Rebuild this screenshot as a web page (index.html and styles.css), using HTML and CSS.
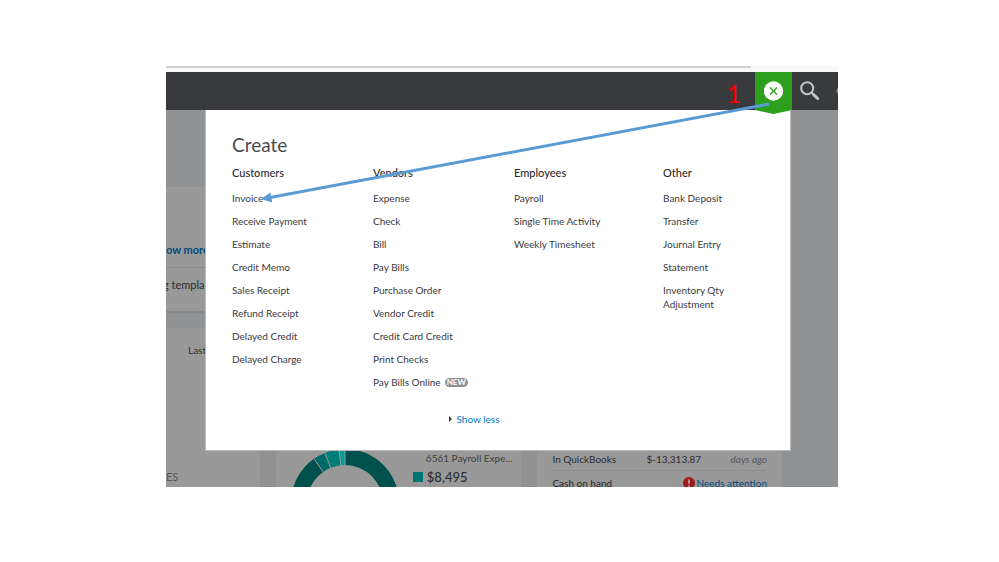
FILE: index.html
```html
<!DOCTYPE html>
<html lang="en">
<head>
    <meta charset="UTF-8">
    <meta name="viewport" content="width=device-width, initial-scale=1.0">
    <title>Create</title>
    <link rel="stylesheet" href="styles.css">
</head>
<body>

    <div class="frame">
        <div class="strip"></div>

        <header class="topbar">
            <span class="step">1</span>
            <button class="create-btn" aria-label="Close create menu">
                <svg width="20" height="20" viewBox="0 0 20 20">
                    <circle cx="9.5" cy="10" r="9.7" fill="#fff"/>
                    <path d="M6 6.500l7 7M13 6.500l-7 7" stroke="#2ca01c" stroke-width="1.4"/>
                </svg>
            </button>
            <button class="search-btn" aria-label="Search">
                <svg width="20" height="20" viewBox="0 0 20 20">
                    <circle cx="7.2" cy="7.2" r="6" fill="none" stroke="#c3c6cb" stroke-width="2"/>
                    <path d="M11.5 11.500l2.500 2.500" stroke="#c3c6cb" stroke-width="2"/>
                    <path d="M13.8 13.800l3.900 3.700" stroke="#c3c6cb" stroke-width="3" stroke-linecap="round"/>
                </svg>
            </button>
            <span class="more-dot"></span>
        </header>

        <main class="dashboard">
            <section class="card setup">
                <div class="setup-top"><a href="#">ow more</a></div>
                <div class="setup-bottom">g templa</div>
            </section>

            <div class="cards">
                <section class="card income">
                    <span class="period">Last</span>
                    <span class="label">ES</span>
                </section>

                <section class="card expenses">
                    <svg class="donut" width="108" height="38" viewBox="0 0 108 38">
                        <!-- ring, centre 54,54 -->
                        <path d="M54 0A54 54 0 0 1 108 54H92A38 38 0 0 0 54 16Z" fill="#00514d"/>
                        <path d="M0 54A54 54 0 0 1 23 9.8L32.2 22.9A38 38 0 0 0 16 54Z" fill="#00514d"/>
                        <path d="M23 9.8A54 54 0 0 1 33.8 3.9L39.8 18.8A38 38 0 0 0 32.2 22.9Z" fill="#006b66"/>
                        <path d="M33.8 3.9A54 54 0 0 1 48.1 .3L49.8 16.2A38 38 0 0 0 39.8 18.8Z" fill="#007f79"/>
                        <path d="M48.1 .3A54 54 0 0 1 54 0V16A38 38 0 0 0 49.8 16.2Z" fill="#00a098"/>
                        <path d="M23 9.8l9.2 13.1M33.8 3.9l6 14.9M48.1 .3l1.7 15.9M54 0v16" stroke="#999" stroke-width="1"/>
                    </svg>
                    <div class="legend">
                        <span class="legend-name">6561 Payroll Expe...</span>
                        <span class="legend-value">$8,495</span>
                    </div>
                </section>

                <section class="card accounts">
                    <div class="account">
                        <span class="account-name">In QuickBooks</span>
                        <span class="amount">$-13,313.87</span>
                        <em>days ago</em>
                    </div>
                    <div class="account">
                        <strong>Cash on hand</strong>
                        <a class="attention" href="#">
                            <svg width="12" height="12" viewBox="0 0 12 12">
                                <circle cx="6" cy="6" r="6" fill="#a01b1b"/>
                                <path d="M6 2.4v4.4M6 8.2v1.5" stroke="#bbb" stroke-width="1.5"/>
                            </svg>
                            Needs attention
                        </a>
                    </div>
                </section>
            </div>

            <nav class="menu">
                <h1>Create</h1>
                <div class="columns">
                    <div class="column">
                        <h2>Customers</h2>
                        <ul>
                            <li><a href="#">Invoice</a></li>
                            <li><a href="#">Receive Payment</a></li>
                            <li><a href="#">Estimate</a></li>
                            <li><a href="#">Credit Memo</a></li>
                            <li><a href="#">Sales Receipt</a></li>
                            <li><a href="#">Refund Receipt</a></li>
                            <li><a href="#">Delayed Credit</a></li>
                            <li><a href="#">Delayed Charge</a></li>
                        </ul>
                    </div>
                    <div class="column">
                        <h2>Vendors</h2>
                        <ul>
                            <li><a href="#">Expense</a></li>
                            <li><a href="#">Check</a></li>
                            <li><a href="#">Bill</a></li>
                            <li><a href="#">Pay Bills</a></li>
                            <li><a href="#">Purchase Order</a></li>
                            <li><a href="#">Vendor Credit</a></li>
                            <li><a href="#">Credit Card Credit</a></li>
                            <li><a href="#">Print Checks</a></li>
                            <li class="with-badge"><a href="#">Pay Bills Online</a> <span class="badge">NEW</span></li>
                        </ul>
                    </div>
                    <div class="column">
                        <h2>Employees</h2>
                        <ul>
                            <li><a href="#">Payroll</a></li>
                            <li><a href="#">Single Time Activity</a></li>
                            <li><a href="#">Weekly Timesheet</a></li>
                        </ul>
                    </div>
                    <div class="column">
                        <h2>Other</h2>
                        <ul>
                            <li><a href="#">Bank Deposit</a></li>
                            <li><a href="#">Transfer</a></li>
                            <li><a href="#">Journal Entry</a></li>
                            <li><a href="#">Statement</a></li>
                            <li><a href="#">Inventory Qty<br>Adjustment</a></li>
                        </ul>
                    </div>
                </div>
                <a class="show-less" href="#">Show less</a>
            </nav>
        </main>

        <!-- Arrow from the create button to Invoice -->
        <svg class="arrow" viewBox="0 0 672 421" preserveAspectRatio="none">
            <path d="M603 38L104 131.500" stroke="#5b9bd5" stroke-width="3"/>
            <path d="M95 133L104.500 126.500L106.300 136.500Z" fill="#5b9bd5"/>
        </svg>
    </div>

</body>
</html>
```
FILE: styles.css
```css
* {
    box-sizing: border-box;
}

body {
    margin: 0;
    padding: 66px 161px 75px 166px;
    background-color: #fff;
    font-family: Lato, "Open Sans", sans-serif;
    font-size: 10px;
    line-height: 14px;
    color: #2c2d30;
}

a {
    color: inherit;
    text-decoration: none;
}

h1,
h2,
ul {
    margin: 0;
    padding: 0;
    list-style: none;
}

button {
    padding: 0;
    border: none;
    background: none;
    cursor: pointer;
}

.frame {
    position: relative;
    overflow: hidden;
}

/* Browser edge above the app */
.strip {
    height: 6px;
    background: linear-gradient(#cfcfcf, #cfcfcf) no-repeat 0 0 / 87% 2px #f8f8f8;
}

/* Top bar */
.topbar {
    position: relative;
    z-index: 2;
    display: flex;
    justify-content: flex-end;
    height: 38px;
    background-color: #393a3d;
}

.step {
    margin-right: 14px;
    color: #f00;
    font-size: 24px;
    font-weight: 500;
    line-height: 43px;
}

.create-btn {
    width: 37px;
    height: 42px;
    padding-bottom: 4px;
    background-color: #2ca01c;
    clip-path: polygon(0 0, 100% 0, 100% 38px, 50% 100%, 0 38px);
}

.search-btn {
    width: 36px;
}

.create-btn svg,
.search-btn svg {
    display: block;
    margin: 0 auto;
}

.more-dot {
    width: 10px;
    height: 38px;
    background: radial-gradient(circle at 12px 19px, #83868c 3px, transparent 4px);
}

/* Dashboard behind the menu */
.dashboard {
    position: relative;
    padding: 77px 56px 0 0;
    background-color: #919294;
}

.card {
    background-color: #999;
}

.setup {
    margin-bottom: 15px;
    border-bottom: 2px solid #85878a;
    font-size: 11px;
}

.setup-top {
    height: 81px;
    padding-top: 56px;
    border-bottom: 1px solid #898b90;
    font-weight: bold;
    color: #004a7c;
}

.setup-bottom {
    height: 43px;
    padding-top: 10px;
    text-indent: -3px;
}

.cards {
    display: grid;
    grid-template-columns: 94fr 246fr 245fr;
    grid-template-rows: 159px;
    gap: 16px;
    overflow: hidden;
}

.income {
    display: flex;
    flex-direction: column;
    justify-content: space-between;
    padding: 15px 0 3px;
}

.period {
    padding-left: 22px;
}

.label {
    color: #55585c;
    font-size: 11px;
}

.expenses {
    display: flex;
    align-items: flex-end;
    gap: 14px;
    padding-left: 15px;
}

.donut {
    display: block;
}

.legend {
    display: flex;
    flex-direction: column;
    gap: 5px;
    padding-bottom: 3px;
    white-space: nowrap;
}

.legend-name {
    padding-left: 13px;
    color: #3c3e41;
}

.legend-value {
    display: flex;
    align-items: center;
    gap: 4px;
    font-size: 13px;
    font-weight: 500;
}

.legend-value::before {
    content: "";
    width: 10px;
    height: 10px;
    background-color: #00746f;
}

.accounts {
    padding: 122px 15px 0;
}

.account {
    display: flex;
    justify-content: space-between;
    white-space: nowrap;
}

.account:first-child {
    padding: 2px 0 4px;
    border-bottom: 1px solid #8c8d90;
}

.account + .account {
    padding-top: 5px;
}

.account strong {
    font-weight: 500;
}

.account-name {
    width: 94px;
}

.amount {
    flex: 1;
}

.account em {
    color: #55585c;
}

.attention {
    display: flex;
    align-items: center;
    gap: 2px;
    color: #004a7c;
}

/* Create menu */
.menu {
    position: absolute;
    top: 0;
    left: 39px;
    right: 47px;
    padding: 23px 26px 24px;
    border: 1px solid #b9bbbf;
    border-top: none;
    background-color: #fff;
}

.menu h1 {
    color: #4a4b4f;
    font-size: 19px;
    font-weight: normal;
    line-height: 24px;
}

.columns {
    display: grid;
    grid-template-columns: 141fr 141fr 149fr 101fr;
    margin-top: 9px;
}

.column h2 {
    margin-bottom: 11px;
    font-size: 11px;
    font-weight: 500;
    line-height: 14px;
}

.column ul {
    display: flex;
    flex-direction: column;
    gap: 9px;
    color: #393a3d;
    white-space: nowrap;
}

.with-badge {
    display: flex;
    align-items: center;
    gap: 4px;
}

.badge {
    padding: 0 2px;
    border-radius: 5px;
    background-color: #8d9096;
    color: #fff;
    font-size: 8px;
    font-weight: bold;
    line-height: 9px;
}

.show-less {
    display: flex;
    align-items: center;
    justify-content: center;
    gap: 4px;
    margin-top: 23px;
    padding-right: 47px;
    color: #0077c5;
}

.show-less::before {
    content: "";
    border: 3px solid transparent;
    border-right: none;
    border-left-color: #393a3d;
}

/* Annotation over the page */
.arrow {
    position: absolute;
    z-index: 3;
    top: 0;
    left: 0;
    width: 100%;
    height: 100%;
    pointer-events: none;
}
```
